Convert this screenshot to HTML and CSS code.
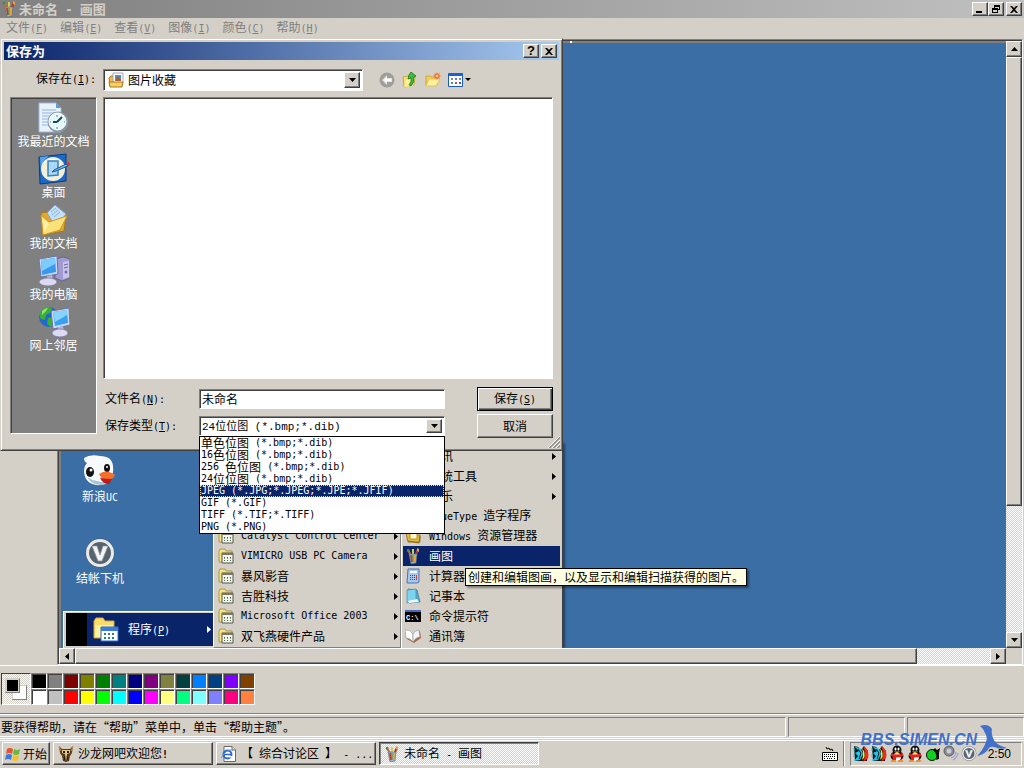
FILE: index.html
```html
<!DOCTYPE html>
<html lang="zh-CN">
<head>
  <meta charset="UTF-8">
  <meta name="viewport" content="width=device-width, initial-scale=1.0">
  <title>未命名 - 画图</title>
  <link rel="stylesheet" href="styles.css">
</head>
<body>
  <!-- 共用图标 -->
  <svg class="defs" aria-hidden="true">
    <symbol id="i-down" viewBox="0 0 7 4"><path d="M0 0h7L3.500 4z"/></symbol>
    <symbol id="i-up" viewBox="0 0 7 4"><path d="M0 4h7L3.500 0z"/></symbol>
    <symbol id="i-right" viewBox="0 0 4 7"><path d="M0 0v7l4-3.500z"/></symbol>
    <symbol id="i-left" viewBox="0 0 4 7"><path d="M4 0v7L0 3.500z"/></symbol>
    <symbol id="i-close" viewBox="0 0 8 7"><path d="M0 0h2l2 2 2-2h2L5 3.500 8 7H6L4 5 2 7H0l3-3.500z"/></symbol>
    <symbol id="i-paint" viewBox="0 0 16 16">
      <path d="M5 8L2 2l2-1 3 7z" fill="#c9683a"/>
      <path d="M7 8L7 1h2v7z" fill="#d9d04a"/>
      <path d="M9 8l3-7 2 1-3 7z" fill="#b33a2a"/>
      <path d="M2 1l2 0 0 2-2 1z" fill="#3a8f3a"/>
      <path d="M12 0l2 1 0 3-2-1z" fill="#e8a050"/>
      <path d="M4 6l8 0-1 9-5 1z" fill="#9bb4c8" stroke="#5a6a78" stroke-width=".6"/>
      <path d="M6 7l1 7" stroke="#c04030" stroke-width="2"/>
      <path d="M10 7l-1 7" stroke="#e8a030" stroke-width="2"/>
      <path d="M8 7v7" stroke="#4a9a4a"/>
    </symbol>
    <symbol id="i-group" viewBox="0 0 16 16">
      <path d="M1 3l1-2h5l1 2h6v11H1z" fill="#f6e27a" stroke="#a08a3a" stroke-width=".8"/>
      <path d="M4 5h11v10H4z" fill="#f4f4ea" stroke="#55554a"/>
      <path d="M4 5h11v2H4z" fill="#77776a"/>
      <path d="M6 9h1v1H6zM9 9h1v1H9zM12 9h1v1h-1zM6 12h1v1H6zM9 12h1v1H9zM12 12h1v1h-1z" fill="#3a6a4a"/>
      <path d="M6 10h1v1H6zM9 10h1v1H9zM12 10h1v1h-1z" fill="#8aa08a"/>
    </symbol>
    <symbol id="i-penguin" viewBox="0 0 16 17">
      <ellipse cx="8" cy="11" rx="6.500" ry="5" fill="#111"/>
      <circle cx="8" cy="5" r="4.500" fill="#111"/>
      <ellipse cx="8" cy="12" rx="4" ry="4" fill="#fff"/>
      <ellipse cx="6.500" cy="4" rx="1" ry="1.500" fill="#fff"/><ellipse cx="9.500" cy="4" rx="1" ry="1.500" fill="#fff"/>
      <path d="M5 6.500h6L8 8.500z" fill="#f9b21a"/>
      <path d="M2 8q6 3 12 0v3q-6 3-12 0zM4 10h3v5H4z" fill="#e8201a"/>
      <ellipse cx="4.500" cy="16" rx="3" ry="1" fill="#f08a1a"/><ellipse cx="11.500" cy="16" rx="3" ry="1" fill="#f08a1a"/>
    </symbol>
    <symbol id="i-parrot" viewBox="0 0 16 17">
      <path d="M1 1l4 1 3 3 3-4 4 5-1 10H2z" fill="#111"/>
      <path d="M1 1l5 5-4 2 3 3-4 5 6-1 3-6-2-5z" fill="#18c8f0"/>
      <path d="M10 1q7 4 5 12l-5 4q4-8 0-16z" fill="#f02a1a"/>
      <path d="M9 3q4 5 2 10l-2 2q2-6 0-12z" fill="#f8e81a"/>
      <path d="M5 4l3 4-2 6" fill="none" stroke="#111"/>
      <path d="M1 3v3M1 9v3" stroke="#18c8f0"/>
    </symbol>
    <symbol id="i-v" viewBox="0 0 32 32">
      <circle cx="16" cy="16" r="14.500" fill="#4a5a6c"/>
      <circle cx="16" cy="16" r="12.500" fill="#56646f" stroke="#e8eaec" stroke-width="3"/>
      <path d="M8 9h5l3 9 3-9h5l-6 15h-4z" fill="#f4f4f4" stroke="#8a9298" stroke-width=".7"/>
    </symbol>
  </svg>

  <!-- 标题栏 -->
  <header class="titlebar app-title">
    <svg class="icon16"><use href="#i-paint"/></svg>
    <h1 class="title-text">未命名<span class="en"> - </span>画图</h1>
    <div class="title-buttons">
      <button class="win-button" aria-label="最小化"><svg width="8" height="7"><path d="M0 5h6v2H0z"/></svg></button>
      <button class="win-button" aria-label="还原"><svg width="8" height="8"><path d="M2 0h6v5H6V4h1V2H3v1H2zM0 3h6v5H0zM1 5v2h4V5z" fill-rule="evenodd"/></svg></button>
      <button class="win-button apart" aria-label="关闭"><svg width="8" height="7"><use href="#i-close"/></svg></button>
    </div>
  </header>

  <nav class="menubar">
    <button>文件<span class="en">(<u>F</u>)</span></button>
    <button>编辑<span class="en">(<u>E</u>)</span></button>
    <button>查看<span class="en">(<u>V</u>)</span></button>
    <button>图像<span class="en">(<u>I</u>)</span></button>
    <button>颜色<span class="en">(<u>C</u>)</span></button>
    <button>帮助<span class="en">(<u>H</u>)</span></button>
  </nav>

  <main class="workspace">
    <div class="frame">
      <!-- 画布：桌面截图 -->
      <div class="canvas">
        <div class="desktop">
          <div class="desktop-icon uc">
            <svg width="34" height="32" viewBox="0 0 34 32">
              <path d="M1 3q6-4 16-2 12 0 13 10 1 8-3 14-5 6-14 5Q1 28 1 15q0-4 3-7-3-1-3-5z" fill="#f6fafc"/>
              <path d="M4 22q5 8 14 8 6 0 9-4-8 2-13 0-6-1-10-4z" fill="#a8c4d4"/>
              <ellipse cx="7" cy="17" rx="4" ry="5" fill="#111"/><circle cx="8" cy="15" r="1.500" fill="#fff"/>
              <ellipse cx="24" cy="13" rx="3" ry="4" fill="#111"/><circle cx="24" cy="12" r="1" fill="#fff"/>
              <path d="M16 19q6-5 15 0 2 1-1 4l-8 4q-4-4-6-8z" fill="#f4702a"/>
              <path d="M17 23q5 1 12 1l-3 5q-6 0-9-6z" fill="#c01a1a"/>
            </svg>
            <span>新浪<span class="en">UC</span></span>
          </div>
          <div class="desktop-icon checkout">
            <svg width="32" height="32"><use href="#i-v"/></svg>
            <span>结帐下机</span>
          </div>

          <div class="start-menu">
            <div class="start-strip"></div>
            <div class="start-item">
              <svg width="26" height="26" viewBox="0 0 26 26">
                <path d="M1 4l2-3h7l2 3h9v17H1z" fill="#f8dc6a" stroke="#d8a83a"/>
                <path d="M2 8h18v12H2z" fill="#fdf0a0"/>
                <path d="M8 10h17v14H8z" fill="#fff" stroke="#2a6ac8"/>
                <path d="M8 10h17v4H8z" fill="#3a7ae0"/>
                <path d="M11 16h2v2h-2zM15 16h2v2h-2zM19 16h2v2h-2zM11 20h2v2h-2zM15 20h2v2h-2zM19 20h2v2h-2z" fill="#2a7a9a"/>
              </svg>
              <span>程序<span class="en">(<u>P</u>)</span></span>
              <svg class="arrow" width="4" height="7"><use href="#i-right"/></svg>
            </div>
          </div>

          <ul class="submenu programs">
            <li><svg class="icon16"><use href="#i-group"/></svg><span class="en">Catalyst Control Center</span><svg class="arrow" width="4" height="7"><use href="#i-right"/></svg></li>
            <li><svg class="icon16"><use href="#i-group"/></svg><span class="en">VIMICRO USB PC Camera</span><svg class="arrow" width="4" height="7"><use href="#i-right"/></svg></li>
            <li><svg class="icon16"><use href="#i-group"/></svg><span>暴风影音</span><svg class="arrow" width="4" height="7"><use href="#i-right"/></svg></li>
            <li><svg class="icon16"><use href="#i-group"/></svg><span>吉胜科技</span><svg class="arrow" width="4" height="7"><use href="#i-right"/></svg></li>
            <li><svg class="icon16"><use href="#i-group"/></svg><span class="en">Microsoft Office 2003</span><svg class="arrow" width="4" height="7"><use href="#i-right"/></svg></li>
            <li><svg class="icon16"><use href="#i-group"/></svg><span>双飞燕硬件产品</span><svg class="arrow" width="4" height="7"><use href="#i-right"/></svg></li>
          </ul>

          <ul class="submenu accessories">
            <li><svg class="icon16"><use href="#i-group"/></svg><span>通讯</span><svg class="arrow" width="4" height="7"><use href="#i-right"/></svg></li>
            <li><svg class="icon16"><use href="#i-group"/></svg><span>系统工具</span><svg class="arrow" width="4" height="7"><use href="#i-right"/></svg></li>
            <li><svg class="icon16"><use href="#i-group"/></svg><span>娱乐</span><svg class="arrow" width="4" height="7"><use href="#i-right"/></svg></li>
            <li><svg class="icon16"><use href="#i-group"/></svg><span><span class="en">TrueType </span>造字程序</span></li>
            <li>
              <svg class="icon16" viewBox="0 0 16 16"><path d="M1 5h6l1 2h7v7H3z" fill="#e8b83a" stroke="#8a6a1a" stroke-width=".8"/><path d="M5 3h7v8H5z" fill="#fff8c8" stroke="#b8902a"/><path d="M3 13l11 2 1-7" fill="none" stroke="#8a6a1a"/></svg>
              <span><span class="en">Windows </span>资源管理器</span>
            </li>
            <li class="active"><svg class="icon16"><use href="#i-paint"/></svg><span>画图</span></li>
            <li>
              <svg class="icon16" viewBox="0 0 16 16"><path d="M3 1h11v13l-2 1H2z" fill="#a8c8f0" stroke="#4a72b0"/><path d="M5 3h7v2H5z" fill="#fff"/><path d="M5 7h1v1H5zM7 7h1v1H7zM9 7h1v1H9zM5 9h1v1H5zM7 9h1v1H7zM9 9h1v1H9zM5 11h1v1H5zM7 11h1v1H7zM9 11h1v1H9z" fill="#2a52a0"/><path d="M11 7h1v5h-1z" fill="#c04a3a"/></svg>
              <span>计算器</span>
            </li>
            <li>
              <svg class="icon16" viewBox="0 0 16 16"><path d="M3 1l9 1 3 12-11 1z" fill="#4ab0d8" stroke="#3a7a9a" stroke-width=".8"/><path d="M2 2l9-1 0 11-9 3z" fill="#7ad4f0" stroke="#5a8aa0" stroke-width=".8"/><path d="M3 13l9-2 2 3-10 1z" fill="#f8f8f8"/></svg>
              <span>记事本</span>
            </li>
            <li>
              <svg class="icon16" viewBox="0 0 16 16"><path d="M0 3h16v11H0z" fill="#000"/><path d="M0 2h16v2H0z" fill="#4a6ac0"/><text class="cmd-text" x="1" y="12">C:\</text></svg>
              <span>命令提示符</span>
            </li>
            <li>
              <svg class="icon16" viewBox="0 0 16 16"><path d="M0 4l8 3 7-4 1 7-7 5-7-4z" fill="#a86a4a"/><path d="M0 2q5-1 8 4v8q-3-4-7-4z" fill="#fff" stroke="#8a8a8a" stroke-width=".6"/><path d="M8 6q2-4 6-4l1 7q-4 0-7 5z" fill="#f0f4f8" stroke="#8a8a8a" stroke-width=".6"/></svg>
              <span>通讯簿</span>
            </li>
          </ul>

          <div class="tooltip" role="tooltip">创建和编辑图画，以及显示和编辑扫描获得的图片。</div>
        </div>
      </div>

      <div class="scrollbar vertical">
        <button class="scroll-button" aria-label="向上滚动"><svg width="7" height="4"><use href="#i-up"/></svg></button>
        <div class="track"><div class="thumb"></div></div>
        <button class="scroll-button" aria-label="向下滚动"><svg width="7" height="4"><use href="#i-down"/></svg></button>
      </div>
      <div class="scrollbar horizontal">
        <button class="scroll-button" aria-label="向左滚动"><svg width="4" height="7"><use href="#i-left"/></svg></button>
        <div class="track"><div class="thumb"></div></div>
        <button class="scroll-button" aria-label="向右滚动"><svg width="4" height="7"><use href="#i-right"/></svg></button>
      </div>
    </div>

    <!-- 保存为对话框 -->
    <section class="dialog" role="dialog" aria-labelledby="dialog-title">
      <div class="titlebar dialog-title">
        <h2 class="title-text" id="dialog-title">保存为</h2>
        <div class="title-buttons">
          <button class="win-button" aria-label="帮助"><b>?</b></button>
          <button class="win-button apart" aria-label="关闭"><svg width="8" height="7"><use href="#i-close"/></svg></button>
        </div>
      </div>

      <div class="dialog-body">
        <div class="look-in">
          <label for="folder">保存在<span class="en">(<u>I</u>):</span></label>
          <div class="combo folder-combo">
            <svg width="16" height="16" viewBox="0 0 16 16">
              <path d="M1 6l2-2h3l1 9-5 1z" fill="#f0b840" stroke="#a87820"/>
              <path d="M5 1h10v10H5z" fill="#fff" stroke="#a0a8b8"/>
              <path d="M7 3h6v6H7z" fill="#4a90e0"/><path d="M8 9V6l2-2 3 3v2z" fill="#a8603a"/>
              <path d="M1 10h14l-1 5H2z" fill="#f8d060" stroke="#a87820"/>
            </svg>
            <select id="folder"><option>图片收藏</option></select>
            <span class="drop"><svg width="7" height="4"><use href="#i-down"/></svg></span>
          </div>
          <div class="tools">
            <button aria-label="后退"><svg width="16" height="16" viewBox="0 0 16 16"><circle cx="8" cy="8" r="7.500" fill="#a09e9a"/><path d="M8 3L3 8l5 5v-3h5V6H8z" fill="#e4e2de"/><path d="M8 5L5 8l3 3V9h4V7H8z" fill="#fff"/></svg></button>
            <button aria-label="向上一级"><svg width="16" height="16" viewBox="0 0 16 16"><path d="M1 5l5-1 1 1 6-1-1 9-10 2z" fill="#f8e070" stroke="#d0a838"/><path d="M4 8l9-2-2 8-9 1z" fill="#fff09a"/><path d="M9 0l5 4-2 1q1 5-3 9l-2-1q3-4 2-7L6 7q0-4 3-7z" fill="#3cb83c" stroke="#1a7a1a" stroke-width=".8"/></svg></button>
            <button aria-label="新建文件夹"><svg width="16" height="16" viewBox="0 0 16 16"><path d="M1 4h4l1 1h6v8H1z" fill="#f0d060" stroke="#d0a838"/><path d="M4 7h11l-4 7H1z" fill="#fff09a" stroke="#e0bc50" stroke-width=".8"/><path d="M12 0l1 2 2-1-1 2 2 1-2 1 1 2-2-1-1 2-1-2-2 1 1-2-2-1 2-1-1-2 2 1z" fill="#f07030"/><circle cx="12" cy="4" r="1.200" fill="#ffe080"/></svg></button>
            <button aria-label="查看菜单"><svg width="23" height="16" viewBox="0 0 23 16"><path d="M.5 1.500h14v13H.5z" fill="#fff" stroke="#1a5ac0"/><path d="M1 1h14v3H1z" fill="#1a62d0"/><path d="M3 6h2v2H3zM11 6h2v2h-2z" fill="#7090b0"/><path d="M7 6h2v2H7z" fill="#6080d0"/><path d="M3 10h2v2H3z" fill="#4a9a6a"/><path d="M7 10h2v2H7z" fill="#c05050"/><path d="M11 10h2v2h-2z" fill="#3a62c0"/><path d="M17 6h6l-3 3z"/></svg></button>
          </div>
        </div>

        <div class="dialog-main">
          <nav class="places">
            <button>
              <svg width="32" height="32" viewBox="0 0 32 32"><path d="M1 1h17l5 5v24H1z" fill="#e8f2fc" stroke="#9ab8dc"/><path d="M18 1v5h5z" fill="#5a9ae0"/><path d="M4 8h14M4 11h13M4 14h9M4 17h7M4 20h7M4 23h8" stroke="#90b4e4"/><circle cx="20" cy="20" r="10.500" fill="#8a98a4"/><circle cx="19.500" cy="19.500" r="8.500" fill="#e6f8fa" stroke="#fff"/><path d="M19 20l5-5M19 20h-4" stroke="#1a4a5a" stroke-width="2"/><path d="M19 13v2M19 25v2M12 20h1M26 20h1" stroke="#4a8aa0"/></svg>
              <span>我最近的文档</span>
            </button>
            <button>
              <svg width="32" height="32" viewBox="0 0 32 32"><path d="M1 4l27-3v27L2 31z" fill="#1a6ac8" stroke="#0a3a8a"/><path d="M2 4l9-1Q3 8 3 17z" fill="#5aa4ec"/><ellipse cx="15" cy="16" rx="12" ry="12" fill="#f4f0d8"/><path d="M8 9q5-4 12 0" fill="none" stroke="#fff" stroke-width="2"/><path d="M10 8h10v14l-10 1z" fill="#a8d8fa" stroke="#3a80c0" stroke-width="1.500"/><path d="M16 17l12-6 2 2-12 5-4 1z" fill="#70b8f0" stroke="#205890"/><path d="M28 10l3-1 1 3-2 1z" fill="#c83a3a"/></svg>
              <span>桌面</span>
            </button>
            <button>
              <svg width="32" height="32" viewBox="0 0 32 32"><path d="M3 9l5-1 3 2 17 2-2 15-21 4z" fill="#e0a830" stroke="#a87818"/><path d="M9 9l8-8 11 9-10 13z" fill="#c4e0f8" stroke="#7aa8d0"/><path d="M13 8l5-4M14 11l6-5M16 13l6-5" stroke="#88b4dc"/><path d="M3 11l8 7 18-6-7 14L5 31z" fill="#fce078" stroke="#c89828"/><path d="M5 15l6 5-5 8z" fill="#fff0a8"/></svg>
              <span>我的文档</span>
            </button>
            <button>
              <svg width="32" height="32" viewBox="0 0 32 32"><path d="M18 4l7-2 7 2v19l-8 3-7-3z" fill="#a09cd0" stroke="#605c90" stroke-width=".8"/><path d="M25 7l6-1v16l-6 2z" fill="#c8c4ec"/><path d="M26 10l4-1M26 13l4-1" stroke="#6864a0"/><circle cx="28" cy="17" r="1.500" fill="#7470b0"/><path d="M1 4l18-3 1 18-17 3z" fill="#d0daf4" stroke="#6a74a8"/><path d="M3 5l14-2 1 14-14 3z" fill="#3898f0"/><path d="M3 5l14-2v6L4 16z" fill="#7cccfc"/><path d="M9 21l5-1 1 5H9z" fill="#b8b4d8"/><ellipse cx="10" cy="27" rx="9" ry="4" fill="#dcdaf0" stroke="#7a76a0" stroke-width=".8"/></svg>
              <span>我的电脑</span>
            </button>
            <button>
              <svg width="32" height="32" viewBox="0 0 32 32"><circle cx="11" cy="11" r="10" fill="#2068d0"/><path d="M3 5q5-6 11-3l-2 5-4 2-1 5-4-1Q0 9 3 5zM10 12l6-1 2 6-5 4-4-3z" fill="#38b038"/><path d="M4 5q3-3 6-3l-2 3-4 4z" fill="#98e070"/><path d="M13 5l18-3 1 17-17 4z" fill="#d0daf4" stroke="#6a74a8"/><path d="M15 6l14-2 1 13-13 3z" fill="#38a0f0"/><path d="M15 6l14-2v5l-12 7z" fill="#88d4fc"/><path d="M20 21l5-1 1 5h-6z" fill="#b8b4d8"/><ellipse cx="22" cy="27" rx="8" ry="4" fill="#dcdaf0" stroke="#7a76a0" stroke-width=".8"/></svg>
              <span>网上邻居</span>
            </button>
          </nav>

          <div class="files">
            <div class="file-list"></div>
            <div class="form-row">
              <label for="file-name">文件名<span class="en">(<u>N</u>):</span></label>
              <input type="text" id="file-name" class="file-name" value="未命名">
              <button class="push default">保存<span class="en">(<u>S</u>)</span></button>
            </div>
            <div class="form-row">
              <label for="file-type">保存类型<span class="en">(<u>T</u>):</span></label>
              <div class="combo type-combo">
                <select id="file-type"><option>24位位图 (*.bmp;*.dib)</option></select>
                <span class="drop"><svg width="7" height="4"><use href="#i-down"/></svg></span>
                <ul class="type-list" role="listbox" aria-label="保存类型">
                  <li role="option">单色位图<span class="en"> (*.bmp;*.dib)</span></li>
                  <li role="option"><span class="en">16</span>色位图<span class="en"> (*.bmp;*.dib)</span></li>
                  <li role="option"><span class="en">256 </span>色位图<span class="en"> (*.bmp;*.dib)</span></li>
                  <li role="option"><span class="en">24</span>位位图<span class="en"> (*.bmp;*.dib)</span></li>
                  <li role="option" class="selected" aria-selected="true"><span class="en">JPEG (*.JPG;*.JPEG;*.JPE;*.JFIF)</span></li>
                  <li role="option"><span class="en">GIF (*.GIF)</span></li>
                  <li role="option"><span class="en">TIFF (*.TIF;*.TIFF)</span></li>
                  <li role="option"><span class="en">PNG (*.PNG)</span></li>
                </ul>
              </div>
              <button class="push">取消</button>
            </div>
          </div>
        </div>
      </div>
      <svg class="grip" width="12" height="12" viewBox="0 0 12 12"><path d="M0 12L12 0M4 12l8-8M8 12l4-4" stroke="#fff"/><path d="M1 12L12 1M2 12L12 2M5 12l7-7M6 12l6-6M9 12l3-3M10 12l2-2" stroke="#808080" stroke-width=".8"/></svg>
    </section>
  </main>

  <!-- 颜料盒 -->
  <div class="colorbox">
    <div class="current"><i class="back"></i><i class="fore"></i></div>
    <div class="swatches">
      <button style="background:#000000" aria-label="黑色"></button>
      <button style="background:#808080" aria-label="灰色"></button>
      <button style="background:#800000" aria-label="深红"></button>
      <button style="background:#808000" aria-label="橄榄色"></button>
      <button style="background:#008000" aria-label="深绿"></button>
      <button style="background:#008080" aria-label="青色"></button>
      <button style="background:#000080" aria-label="深蓝"></button>
      <button style="background:#800080" aria-label="紫色"></button>
      <button style="background:#808040" aria-label="土黄"></button>
      <button style="background:#004040" aria-label="墨绿"></button>
      <button style="background:#0080ff" aria-label="天蓝"></button>
      <button style="background:#004080" aria-label="藏青"></button>
      <button style="background:#8000ff" aria-label="紫罗兰"></button>
      <button style="background:#804000" aria-label="棕色"></button>
      <button style="background:#ffffff" aria-label="白色"></button>
      <button style="background:#c0c0c0" aria-label="浅灰"></button>
      <button style="background:#ff0000" aria-label="红色"></button>
      <button style="background:#ffff00" aria-label="黄色"></button>
      <button style="background:#00ff00" aria-label="绿色"></button>
      <button style="background:#00ffff" aria-label="浅青"></button>
      <button style="background:#0000ff" aria-label="蓝色"></button>
      <button style="background:#ff00ff" aria-label="洋红"></button>
      <button style="background:#ffff80" aria-label="浅黄"></button>
      <button style="background:#00ff80" aria-label="春绿"></button>
      <button style="background:#80ffff" aria-label="淡青"></button>
      <button style="background:#8080ff" aria-label="淡紫"></button>
      <button style="background:#ff0080" aria-label="玫红"></button>
      <button style="background:#ff8040" aria-label="橙色"></button>
    </div>
  </div>

  <div class="statusbar">
    <div class="status-cell help">要获得帮助，请在“帮助”菜单中，单击“帮助主题”。</div>
    <div class="status-cell"></div>
    <div class="status-cell"></div>
  </div>

  <!-- 任务栏 -->
  <footer class="taskbar">
    <button class="task start">
      <svg width="16" height="16" viewBox="0 0 16 16"><path d="M2 3q3-2 6 0L7 8Q4 6 1 8z" fill="#e8542a"/><path d="M9 3q3 2 6 0l-1 5q-3 2-6 0z" fill="#6ab83a"/><path d="M1 9q3-2 6 0l-1 5q-3-2-6 0z" fill="#3a7ae0"/><path d="M8 9q3 2 6 0l-1 5q-3 2-6 0z" fill="#f4c02a"/></svg>
      <span>开始</span>
    </button>
    <button class="task">
      <svg width="16" height="16" viewBox="0 0 16 16"><path d="M1 0l3 3h8l3-3-1 7-2 3-1 5-3 1-3-1-1-5-2-3z" fill="#5a3a1a"/><path d="M4 4h8v3l-3 1-1 7-1-7-3-1z" fill="#e8c878"/><path d="M5 5h2v2H5zM9 5h2v2H9zM6 10h1v4H6zM9 10h1v4H9z" fill="#2a1a0a"/><path d="M1 1l2 4M15 1l-2 4" stroke="#c89848"/></svg>
      <span>沙龙网吧欢迎您<b class="en">!</b></span>
    </button>
    <button class="task">
      <svg width="16" height="16" viewBox="0 0 16 16"><path d="M3 .5h8L14.500 4v11.500H3z" fill="#fff" stroke="#6a6a6a"/><path d="M11 .5V4h3.500" fill="#ddd" stroke="#6a6a6a"/><circle cx="6.500" cy="8.500" r="4" fill="none" stroke="#2a6ad0" stroke-width="2"/><path d="M3 8.500h8" stroke="#2a6ad0" stroke-width="1.500"/><path d="M8 10h4v1.500H8z" fill="#fff"/><path d="M0 12Q5 3 12 4" fill="none" stroke="#5a9ae8"/></svg>
      <span>【<span class="en"> </span>综合讨论区<span class="en"> </span>】<span class="en"> - ...</span></span>
    </button>
    <button class="task pressed">
      <svg width="16" height="16"><use href="#i-paint"/></svg>
      <span>未命名<span class="en"> - </span>画图</span>
    </button>
    <div class="tray-area">
      <svg width="16" height="14" viewBox="0 0 16 14"><path d="M4 0l1 2 2-1 1 2 2-1 1 2" fill="none" stroke="#000"/><path d="M.5 5.500h15v8H.5z" fill="#fff" stroke="#000"/><path d="M2 7.500h12M2 9.500h12M2 11.500h2M5 11.500h6M12 11.500h2" stroke="#000" stroke-dasharray="1 1"/></svg>
      <div class="divider"></div>
      <div class="tray">
        <svg width="16" height="17"><use href="#i-parrot"/></svg>
        <svg width="16" height="17"><use href="#i-parrot"/></svg>
        <svg width="16" height="17"><use href="#i-penguin"/></svg>
        <svg width="16" height="17"><use href="#i-penguin"/></svg>
        <svg width="16" height="17" viewBox="0 0 16 17"><circle cx="7" cy="10" r="5.500" fill="#10d020" stroke="#111"/><path d="M8 5l2-2 2 2 3-2-1 5v6l-3 1q2-5-3-10z" fill="#111"/></svg>
        <svg width="16" height="17" viewBox="0 0 16 17"><circle cx="6" cy="6" r="5" fill="#8a8c94" stroke="#5a5c68"/><circle cx="6" cy="6" r="2.500" fill="#c8cad4"/><path d="M8 13q4-1 5-6M10 15q4-2 5-7" fill="none" stroke="#9a98d8" stroke-width="1.200"/></svg>
        <svg width="16" height="17" viewBox="0 0 32 32"><use href="#i-v"/></svg>
        <time class="clock">2:50</time>
      </div>
    </div>
  </footer>

  <!-- 水印 -->
  <div class="watermark">
    <span>BBS.SIMEN.CN</span>
    <svg width="30" height="32" viewBox="0 0 30 32"><path d="M3 2q8-3 12 3-1 4 1 9 2 7 14 10-6 2-13-1-3-1-5 1-3 6-12 8 6-6 9-14 2-5-1-9Q6 4 3 2z"/></svg>
  </div>
</body>
</html>
```

FILE: styles.css
```css
* {
  box-sizing: border-box;
}
body {
  margin: 0;
  height: 100vh;
  display: flex;
  flex-direction: column;
  overflow: hidden;
  position: relative;
  background-color: #d4d0c8;
  color: #000;
  font-family: "Noto Sans CJK SC", "Liberation Sans", sans-serif;
  font-size: 12px;
  line-height: 16px;
}
button, input, select {
  font: inherit;
  color: inherit;
  margin: 0;
  padding: 0;
  border: none;
  border-radius: 0;
  background: none;
}
ul {
  list-style: none;
  margin: 0;
  padding: 0;
}
svg {
  display: block;
  flex: none;
}
.defs {
  position: absolute;
  width: 0;
  height: 0;
}
.en {
  font-family: "DejaVu Sans Mono", "Liberation Mono", monospace;
  font-size: 10px;
  white-space: pre;
}
.icon16 {
  width: 16px;
  height: 16px;
}

/* 标题栏 */
.titlebar {
  display: flex;
  align-items: center;
  height: 18px;
  flex: none;
  padding: 0 2px;
}
.app-title {
  gap: 2px;
  padding-left: 1px;
  background: linear-gradient(to right, #808080, #c0c0c0);
  color: #d4d0c8;
}
.title-text {
  margin: 0;
  font-size: 13px;
  font-weight: bold;
  line-height: 18px;
}
.title-text .en {
  font-size: 12px;
}
.title-buttons {
  display: flex;
  margin-left: auto;
}
.win-button {
  width: 16px;
  height: 14px;
  display: flex;
  align-items: center;
  justify-content: center;
  background-color: #d4d0c8;
  color: #000;
  border: 1px solid;
  border-color: #fff #404040 #404040 #fff;
  box-shadow: inset -1px -1px 0 #808080;
  font-family: "Liberation Sans", sans-serif;
  font-size: 13px;
  line-height: 12px;
}
.win-button.apart {
  margin-left: 2px;
}

.menubar {
  display: flex;
  height: 20px;
  flex: none;
  color: #808080;
}
.menubar button {
  padding: 0 6px;
}

/* 工作区 */
.workspace {
  flex: 1;
  min-height: 0;
  position: relative;
  display: flex;
  padding: 1px 1px 0 57px;
}
.frame {
  flex: 1;
  display: grid;
  grid-template-columns: 1fr 16px;
  grid-template-rows: 1fr 16px;
  padding: 1px 0 0 1px;
  border: 1px solid;
  border-color: #808080 #fff #fff #808080;
  box-shadow: inset 1px 1px 0 #404040;
}
.canvas {
  position: relative;
  background-color: #808080;
  padding: 2px 0 0 2px;
  display: flex;
  min-width: 0;
}
/* 画布控制点 */
.canvas::before {
  content: "";
  position: absolute;
  top: 0;
  left: 54%;
  width: 2px;
  height: 2px;
  background-color: #fff;
}
.desktop {
  flex: 1;
  position: relative;
  overflow: hidden;
  background-color: #3a6ea5;
}
.scrollbar {
  display: flex;
  background: repeating-conic-gradient(#fff 0 25%, #d4d0c8 0 50%) 0 0 / 2px 2px;
}
.vertical {
  flex-direction: column;
}
.scroll-button {
  width: 16px;
  height: 16px;
  flex: none;
  display: flex;
  align-items: center;
  justify-content: center;
}
.scroll-button, .thumb, .drop {
  background-color: #d4d0c8;
  border: 1px solid;
  border-color: #fff #404040 #404040 #fff;
  box-shadow: inset -1px -1px 0 #808080;
}
.track {
  flex: 1;
}
.vertical .thumb {
  height: 78%;
}
.horizontal .thumb {
  width: 92%;
  height: 16px;
}

/* 桌面图标 */
.desktop-icon {
  position: absolute;
  left: 3px;
  width: 72px;
  display: flex;
  flex-direction: column;
  align-items: center;
  gap: 1px;
  color: #fff;
}
.uc {
  top: 412px;
}
.checkout {
  top: 494px;
}

/* 开始菜单 */
.start-menu {
  position: absolute;
  left: 2px;
  bottom: 0;
  width: 151px;
  height: 37px;
  display: flex;
  background-color: #d4d0c8;
  border-top: 1px solid #fff;
  border-left: 1px solid #fff;
  padding: 1px 0 2px 2px;
}
.start-strip {
  width: 21px;
  background-color: #000;
}
.start-item {
  flex: 1;
  display: flex;
  align-items: center;
  gap: 9px;
  padding: 0 3px 0 6px;
  background-color: #0a246a;
  color: #fff;
}
.arrow {
  margin-left: auto;
  fill: currentColor;
}
.submenu {
  position: absolute;
  bottom: 0;
  padding: 2px;
  background-color: #d4d0c8;
  border: 1px solid;
  border-color: #fff #808080 #808080 #fff;
}
.submenu li {
  display: flex;
  align-items: center;
  gap: 7px;
  height: 20px;
  padding: 0 2px;
}
.programs {
  left: 152px;
  width: 188px;
  padding-bottom: 1px;
}
.programs li {
  padding-right: 0;
}
.accessories {
  left: 340px;
  width: 162px;
  padding: 2px 2px 2px 1px;
  border-bottom: none;
  border-right-color: #404040;
  box-shadow: 2px 0 2px rgba(0, 0, 0, 0.4);
}
.accessories li {
  gap: 8px;
  padding-right: 4px;
}
.submenu .active {
  background-color: #0a246a;
  color: #fff;
}
.cmd-text {
  fill: #fff;
  font: bold 7px "Liberation Mono", monospace;
}
.tooltip {
  position: absolute;
  left: 404px;
  bottom: 62px;
  padding: 0 2px;
  background-color: #ffffe1;
  border: 1px solid #000;
  box-shadow: 2px 2px 2px rgba(0, 0, 0, 0.4);
  white-space: nowrap;
}

/* 对话框 */
.dialog {
  position: absolute;
  left: 0;
  top: 0;
  width: 563px;
  padding: 3px;
  background-color: #d4d0c8;
  border: 1px solid;
  border-color: #d4d0c8 #404040 #404040 #d4d0c8;
  box-shadow: inset 1px 1px 0 #fff, inset -1px -1px 0 #808080;
}
.dialog-title {
  background: linear-gradient(to right, #0a246a, #a6caf0);
  color: #fff;
}
.dialog-body {
  padding: 9px 6px 9px 6px;
}
.look-in {
  display: flex;
  align-items: center;
  margin-bottom: 6px;
}
.look-in label {
  width: 93px;
  padding: 0 7px 2px 0;
  text-align: right;
}
.combo {
  position: relative;
  display: flex;
  align-items: stretch;
  padding: 2px;
  background-color: #fff;
  border: 1px solid;
  border-color: #808080 #fff #fff #808080;
  box-shadow: inset 1px 1px 0 #404040;
}
.combo select {
  appearance: none;
  flex: 1;
  min-width: 0;
  outline: none;
}
.drop {
  width: 16px;
  display: flex;
  align-items: center;
  justify-content: center;
  pointer-events: none;
}
.folder-combo {
  width: 260px;
  height: 22px;
  gap: 4px;
  padding-left: 4px;
}
.tools {
  display: flex;
  gap: 7px;
  margin-left: 16px;
}
.dialog-main {
  display: flex;
  align-items: flex-start;
  gap: 6px;
}
.places {
  width: 87px;
  height: 337px;
  padding-top: 4px;
  display: flex;
  flex-direction: column;
  gap: 5px;
  background-color: #808080;
  border: 1px solid;
  border-color: #808080 #fff #fff #808080;
  box-shadow: inset 1px 1px 0 #404040;
}
.places button {
  display: flex;
  flex-direction: column;
  align-items: center;
  line-height: 14px;
  color: #fff;
}
.files {
  flex: 1;
  display: flex;
  flex-direction: column;
  gap: 3px;
}
.file-list {
  height: 282px;
  margin-bottom: 5px;
  background-color: #fff;
  border: 1px solid;
  border-color: #808080 #fff #fff #808080;
  box-shadow: inset 1px 1px 0 #404040;
}
.form-row {
  display: flex;
  align-items: center;
  height: 24px;
}
.form-row label {
  width: 96px;
  padding-left: 2px;
}
.file-name {
  width: 246px;
  height: 20px;
  padding: 0 2px 2px;
  background-color: #fff;
  border: 1px solid;
  border-color: #808080 #fff #fff #808080;
  box-shadow: inset 1px 1px 0 #404040;
  outline: none;
}
.type-combo {
  width: 246px;
  height: 20px;
}
.type-combo select {
  font-family: "Liberation Mono", "Noto Sans CJK SC", monospace;
  font-size: 11px;
}
.type-list {
  position: absolute;
  z-index: 2;
  left: -1px;
  right: -1px;
  top: 19px;
  background-color: #fff;
  border: 1px solid #000;
}
.type-list li {
  display: flex;
  align-items: center;
  height: 12px;
  padding: 0 1px;
  line-height: 12px;
  white-space: nowrap;
}
.type-list .selected {
  background-color: #0a246a;
  color: #fff;
  outline: 1px dotted #f5db95;
  outline-offset: -1px;
}
.push {
  width: 76px;
  height: 24px;
  margin-left: auto;
  background-color: #d4d0c8;
  border: 1px solid;
  border-color: #fff #404040 #404040 #fff;
  box-shadow: inset -1px -1px 0 #808080;
}
.push.default {
  border-color: #000;
  box-shadow: inset 1px 1px 0 #fff, inset -1px -1px 0 #404040, inset -2px -2px 0 #808080;
}
.grip {
  position: absolute;
  right: 2px;
  bottom: 2px;
}

/* 颜料盒 */
.colorbox {
  display: flex;
  flex: none;
  height: 49px;
  padding: 7px 0 0 1px;
  border-top: 1px solid #fff;
  border-bottom: 1px solid #808080;
}
.current {
  position: relative;
  width: 30px;
  height: 32px;
  background: repeating-conic-gradient(#fff 0 25%, #d4d0c8 0 50%) 0 0 / 2px 2px;
  border: 1px solid;
  border-color: #404040 #fff #fff #404040;
}
.current i {
  position: absolute;
  width: 15px;
  height: 15px;
  border: 1px solid #d4d0c8;
  border-right-color: #808080;
  border-bottom-color: #808080;
}
.fore {
  left: 3px;
  top: 4px;
  background-color: #000;
  box-shadow: inset 0 0 0 1px #d4d0c8;
}
.back {
  left: 10px;
  top: 11px;
  background-color: #fff;
}
.swatches {
  display: grid;
  grid-template-columns: repeat(14, 16px);
  grid-auto-rows: 16px;
}
.swatches button {
  border: 1px solid;
  border-color: #808080 #fff #fff #808080;
  box-shadow: inset 1px 1px 0 #404040;
}

.statusbar {
  display: flex;
  flex: none;
  gap: 2px;
  height: 24px;
  padding: 2px 0 1px;
  border-top: 1px solid #fff;
}
.status-cell {
  width: 117px;
  padding: 0 1px;
  line-height: 18px;
  border: 1px solid;
  border-color: #808080 #fff #fff #808080;
}
.status-cell.help {
  flex: 1;
  border-left: none;
}

/* 任务栏 */
.taskbar {
  display: flex;
  flex: none;
  gap: 3px;
  height: 30px;
  padding: 3px 2px 3px;
  border-top: 1px solid #fff;
  box-shadow: inset 0 1px 0 #d4d0c8, inset 0 2px 0 #fff;
}
.task {
  display: flex;
  align-items: center;
  gap: 4px;
  width: 160px;
  height: 23px;
  padding: 0 4px;
  white-space: nowrap;
  overflow: hidden;
  border: 1px solid;
  border-color: #fff #404040 #404040 #fff;
  box-shadow: inset -1px -1px 0 #808080;
}
.task.start {
  width: 48px;
  gap: 2px;
  padding: 0 2px;
}
.task.pressed {
  background: repeating-conic-gradient(#fff 0 25%, #d4d0c8 0 50%) 0 0 / 2px 2px;
  border-color: #404040 #fff #fff #404040;
  box-shadow: inset 1px 1px 0 #808080;
}
.tray-area {
  display: flex;
  align-items: center;
  margin-left: auto;
  gap: 5px;
}
.divider {
  width: 2px;
  height: 25px;
  border-left: 1px solid #808080;
  border-right: 1px solid #fff;
}
.tray {
  display: flex;
  align-items: center;
  gap: 2px;
  height: 24px;
  padding: 0 10px 0 2px;
  border: 1px solid;
  border-color: #808080 #fff #fff #808080;
}
.clock {
  margin-left: 9px;
  font-family: "Liberation Sans", sans-serif;
  font-size: 12px;
}

.watermark {
  position: absolute;
  right: 17px;
  bottom: 12px;
  display: flex;
  align-items: center;
  color: #4370c8;
  fill: #4370c8;
  pointer-events: none;
  font: italic bold 16px "Liberation Sans", sans-serif;
}
```
